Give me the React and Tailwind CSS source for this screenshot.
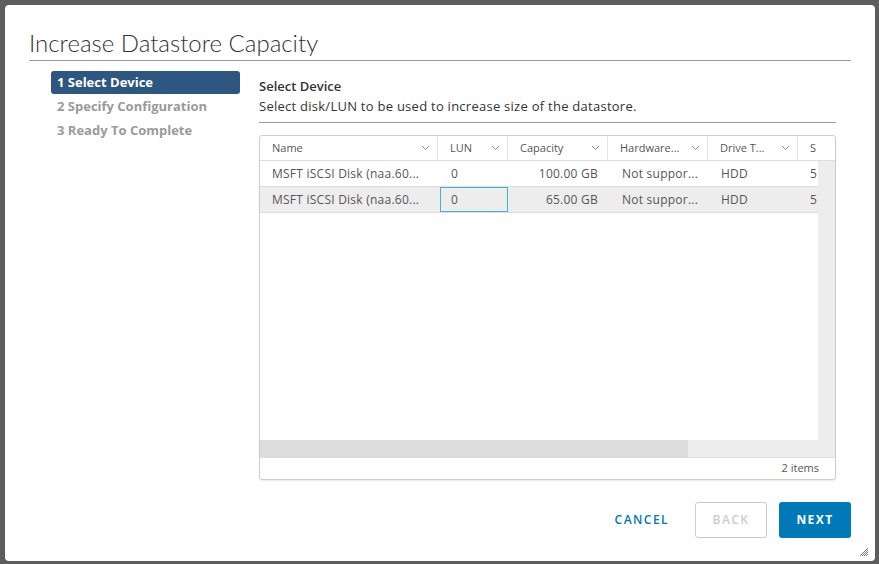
import React from "react";

const columns = [
  { key: "name", label: "Name", w: "w-[178px]" },
  { key: "lun", label: "LUN", w: "w-[70px]" },
  { key: "cap", label: "Capacity", w: "w-[100px]" },
  { key: "hw", label: "Hardware...", w: "w-[100px]" },
  { key: "drive", label: "Drive T...", w: "w-[90px]" },
];

const rows = [
  { name: "MSFT iSCSI Disk (naa.60...", lun: "0", cap: "100.00 GB", hw: "Not suppor...", drive: "HDD", s: "5" },
  { name: "MSFT iSCSI Disk (naa.60...", lun: "0", cap: "65.00 GB", hw: "Not suppor...", drive: "HDD", s: "5" },
];

function Chevron() {
  return (
    <svg width="9" height="6" viewBox="0 0 9 6" className="shrink-0">
      <path d="M1 1 L4.5 4.5 L8 1" fill="none" stroke="#8a8a8a" strokeWidth="1" />
    </svg>
  );
}

function Steps() {
  return (
    <div className="w-[189px] ml-[22px] mt-[10px] flex flex-col text-[13px] font-bold">
      <div className="h-[23px] rounded-[3px] bg-[#2d5680] text-white px-[6px] flex items-center">
        1 Select Device
      </div>
      <div className="h-[24px] px-[6px] flex items-center text-[#9a9a9a] mt-[1px]">
        2 Specify Configuration
      </div>
      <div className="h-[24px] px-[6px] flex items-center text-[#9a9a9a]">
        3 Ready To Complete
      </div>
    </div>
  );
}

function DeviceGrid() {
  return (
    <div className="mt-[12px] h-[345px] border border-[#cccccc] rounded-[3px] flex flex-col overflow-hidden shadow-[0_1px_1px_rgba(0,0,0,0.08)]">
      <div className="flex h-[25px] border-b border-[#dddddd] text-[11px] text-[#565656] shrink-0">
        {columns.map((c) => (
          <div key={c.key} className={`${c.w} shrink-0 flex items-center justify-between pl-[12px] pr-[7px] border-r border-[#e4e4e4] whitespace-nowrap`}>
            <span>{c.label}</span>
            <Chevron />
          </div>
        ))}
        <div className="flex-1 flex items-center pl-[12px]">S</div>
      </div>
      <div className="flex-1 flex min-h-0">
        <div className="flex-1 flex flex-col overflow-hidden">
          <div className="flex-1">
            {rows.map((r, i) => (
              <div
                key={i}
                className={`flex h-[26px] border-b border-[#dddddd] text-[12px] tracking-[0.02em] text-[#565656] ${i === 1 ? "bg-[#ededed]" : "bg-white"}`}
              >
                <div className="w-[178px] shrink-0 pl-[12px] flex items-center whitespace-nowrap">{r.name}</div>
                {i === 1 ? (
                  <div className="w-[68px] ml-[2px] h-[25px] shrink-0 pl-[10px] flex items-center border border-[#49afd9]">
                    {r.lun}
                  </div>
                ) : (
                  <div className="w-[70px] shrink-0 pl-[13px] flex items-center">{r.lun}</div>
                )}
                <div className="w-[100px] shrink-0 pr-[10px] flex items-center justify-end whitespace-nowrap">{r.cap}</div>
                <div className="w-[100px] shrink-0 pl-[14px] flex items-center whitespace-nowrap">{r.hw}</div>
                <div className="w-[90px] shrink-0 pl-[13px] flex items-center">{r.drive}</div>
                <div className="flex-1 pl-[12px] flex items-center overflow-hidden">{r.s}</div>
              </div>
            ))}
          </div>
          <div className="h-[17px] bg-[#ededed] shrink-0 flex">
            <div className="w-[428px] bg-[#dcdcdc]" />
          </div>
        </div>
        <div className="w-[17px] bg-[#ededed] shrink-0" />
      </div>
      <div className="h-[22px] border-t border-[#dddddd] shrink-0 flex items-center justify-end pr-[16px] text-[11px] text-[#565656]">
        2 items
      </div>
    </div>
  );
}

export default function App() {
  return (
    <div
      className="w-[879px] h-[564px] bg-[#5d5d5d] pt-[5px] pl-[5px] overflow-hidden"
      style={{ fontFamily: "'Open Sans', Lato, sans-serif" }}
    >
      <div className="w-[870px] h-[556px] bg-white rounded-[4px] flex flex-col px-[24px] pt-[24px] relative">
        <div
          className="h-[32px] border-b border-[#9a9a9a] text-[24px] font-light text-[#333333] leading-[28px] shrink-0"
          style={{ fontFamily: "Lato, sans-serif" }}
        >
          Increase Datastore Capacity
        </div>
        <div className="flex flex-1">
          <Steps />
          <div className="ml-[19px] w-[577px] pt-[16px]">
            <div className="text-[13px] font-semibold text-[#333333] leading-[18px]">Select Device</div>
            <div className="text-[13px] tracking-[0.02em] text-[#333333] leading-[18px] mt-[2px] pb-[7px] border-b border-[#9a9a9a]">
              Select disk/LUN to be used to increase size of the datastore.
            </div>
            <DeviceGrid />
          </div>
        </div>
        <div className="flex justify-end items-center gap-[12px] pb-[23px] shrink-0">
          <button className="h-[36px] px-[12px] text-[12px] font-semibold tracking-[0.12em] text-[#0079b8]">
            CANCEL
          </button>
          <button className="h-[36px] w-[72px] ml-[2px] border border-[#cccccc] rounded-[3px] text-[12px] font-semibold tracking-[0.12em] text-[#cccccc]">
            BACK
          </button>
          <button className="h-[36px] w-[72px] rounded-[3px] bg-[#0079b8] text-[12px] font-bold tracking-[0.12em] text-white">
            NEXT
          </button>
        </div>
        <svg width="10" height="10" viewBox="0 0 10 10" className="absolute right-[6px] bottom-[4px]">
          <path d="M9 1 L1 9 M9 3 L3 9 M9 5 L5 9 M9 7 L7 9" stroke="#555" strokeWidth="0.8" />
        </svg>
      </div>
    </div>
  );
}
